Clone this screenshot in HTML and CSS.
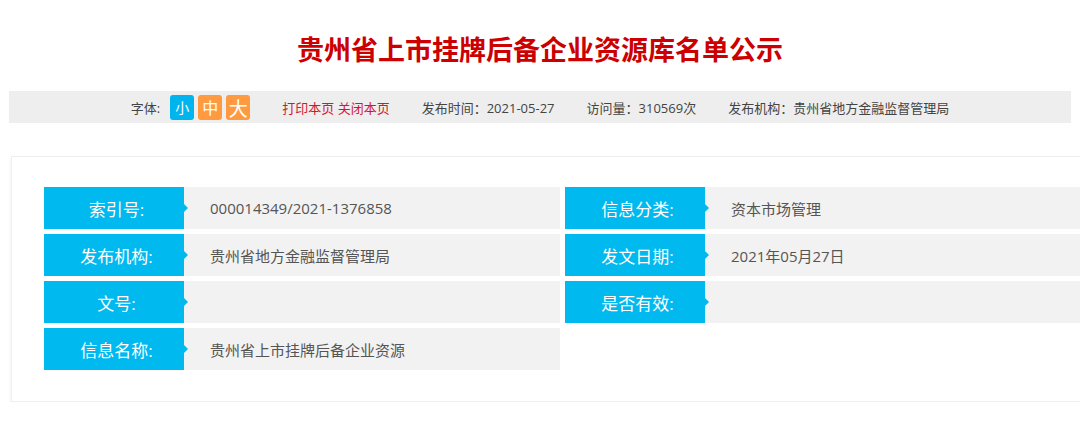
FILE: index.html
```html
<!DOCTYPE html>
<html lang="zh-CN">
<head>
<meta charset="utf-8">
<title>贵州省上市挂牌后备企业资源库名单公示</title>
<link rel="stylesheet" href="styles.css">
</head>
<body>
  <h1 class="title">贵州省上市挂牌后备企业资源库名单公示</h1>
  <div class="bar">
    <div class="fonts">
      <span class="lbl">字体:</span>
      <span class="fbtn small">小</span>
      <span class="fbtn mid">中</span>
      <span class="fbtn big">大</span>
    </div>
    <div class="links"><span>打印本页</span> <span>关闭本页</span></div>
    <div class="meta">发布时间：2021-05-27</div>
    <div class="meta">访问量：310569次</div>
    <div class="meta">发布机构：贵州省地方金融监督管理局</div>
  </div>
  <div class="card">
    <div class="grid">
      <div class="item"><div class="label">索引号:</div><div class="value">000014349/2021-1376858</div></div>
      <div class="item"><div class="label">信息分类:</div><div class="value">资本市场管理</div></div>
      <div class="item"><div class="label">发布机构:</div><div class="value">贵州省地方金融监督管理局</div></div>
      <div class="item"><div class="label">发文日期:</div><div class="value">2021年05月27日</div></div>
      <div class="item"><div class="label">文号:</div><div class="value"></div></div>
      <div class="item"><div class="label">是否有效:</div><div class="value"></div></div>
      <div class="item"><div class="label">信息名称:</div><div class="value">贵州省上市挂牌后备企业资源</div></div>
    </div>
  </div>
</body>
</html>
```
FILE: styles.css
```css
html, body {
  margin: 0;
  padding: 0;
  background: #ffffff;
  overflow: hidden;
}
body {
  font-family: "Open Sans", "Noto Sans CJK SC", sans-serif;
  color: #333;
  width: 1080px;
}
.title {
  margin: 0;
  padding-top: 31px;
  height: 36px;
  line-height: 36px;
  text-align: center;
  font-size: 27px;
  font-weight: bold;
  color: #cc0000;
  font-family: "Noto Sans CJK SC", sans-serif;
}
.bar {
  margin: 24px 9px 0 9px;
  height: 32px;
  background: #eeeeee;
  display: flex;
  align-items: center;
  justify-content: center;
  gap: 32px;
  font-size: 13px;
  color: #444;
}
.fonts {
  display: flex;
  align-items: center;
  gap: 4px;
}
.fonts .lbl {
  margin-right: 6px;
}
.fbtn {
  width: 24px;
  height: 25px;
  border-radius: 3px;
  color: #fff;
  display: flex;
  align-items: center;
  justify-content: center;
  font-family: "Noto Sans CJK SC", sans-serif;
}
.fbtn.small { background: #00b4ee; font-size: 14px; }
.fbtn.mid { background: #ff9a40; font-size: 16px; }
.fbtn.big { background: #ff9a40; font-size: 19px; }
.links {
  color: #d2172f;
}
.card {
  margin: 33px 0 0 11px;
  width: 1037px;
  padding: 30px 32px 31px 32px;
  border: 1px solid #efefef;
  box-shadow: 0 2px 4px rgba(0, 0, 0, 0.06);
  background: #fff;
}
.grid {
  display: grid;
  grid-template-columns: 516px 516px;
  gap: 5px;
}
.item {
  display: flex;
  height: 42px;
  background: #f2f2f2;
}
.label {
  position: relative;
  width: 140px;
  flex: none;
  background: #00b9ef;
  color: #fff;
  font-size: 17px;
  display: flex;
  align-items: center;
  justify-content: center;
  padding-left: 5px;
  box-sizing: border-box;
}
.label::after {
  content: "";
  position: absolute;
  right: -4px;
  top: 50%;
  margin-top: -4px;
  border-style: solid;
  border-width: 4px 0 4px 4px;
  border-color: transparent transparent transparent #00b9ef;
}
.value {
  display: flex;
  align-items: center;
  padding-left: 26px;
  font-size: 15px;
  color: #555;
}
```
